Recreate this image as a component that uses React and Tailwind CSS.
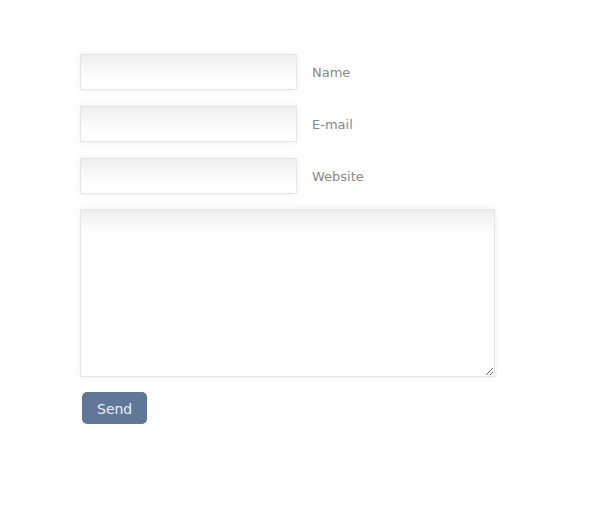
const fields = [
  { id: 'name', label: 'Name', type: 'text' },
  { id: 'email', label: 'E-mail', type: 'email' },
  { id: 'website', label: 'Website', type: 'url' },
]

const fieldStyle =
  'block border border-[#e5e5e5] bg-white bg-[linear-gradient(#eeeeee,#ffffff_25px)] shadow-[0_0_8px_rgba(0,0,0,0.08)] outline-none'

function App() {
  return (
    <form
      className="flex flex-col items-start gap-[15px] px-20 py-[54px] font-['DejaVu_Sans',Verdana,sans-serif] text-[13px] text-[#888888]"
      onSubmit={(e) => e.preventDefault()}
    >
      <div className="flex flex-col gap-4">
        {fields.map(({ id, label, type }) => (
          <div key={id} className="flex items-center gap-[15px]">
            <input id={id} type={type} className={`${fieldStyle} h-9 w-[217px] px-2`} />
            <label htmlFor={id} className="pt-0.5">{label}</label>
          </div>
        ))}
      </div>

      <textarea
        aria-label="Message"
        className={`${fieldStyle} h-[168px] w-full max-w-[415px] resize p-2`}
      />

      <button
        type="submit"
        className="ml-0.5 h-8 rounded-[5px] bg-[#617798] px-[15px] pt-0.5 text-sm text-[#e6eefa]"
      >
        Send
      </button>
    </form>
  )
}

export default App
